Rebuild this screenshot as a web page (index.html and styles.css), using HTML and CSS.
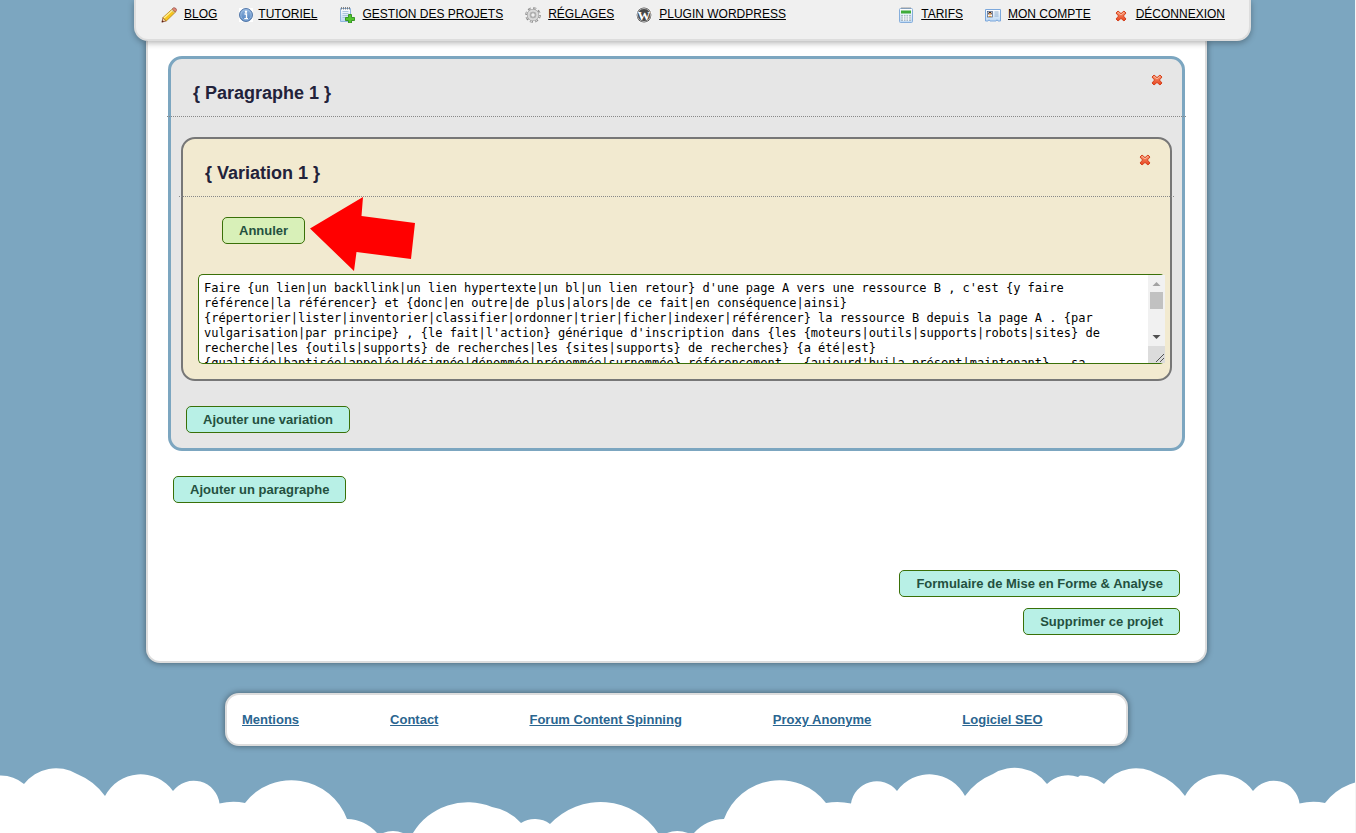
FILE: index.html
```html
<!DOCTYPE html>
<html lang="fr">
<head>
<meta charset="utf-8">
<title>Paragraphes</title>
<link rel="stylesheet" href="styles.css">
</head>
<body>
<svg class="defs" width="0" height="0" aria-hidden="true">
  <defs>
    <linearGradient id="red" x1="0" y1="0" x2="0" y2="1"><stop offset="0" stop-color="#f79a74"/><stop offset="1" stop-color="#e8401c"/></linearGradient>
    <linearGradient id="blue" x1="0" y1="0" x2="0" y2="1"><stop offset="0" stop-color="#8fb4df"/><stop offset="1" stop-color="#4f80bd"/></linearGradient>
    <linearGradient id="sheet" x1="0" y1="0" x2="0" y2="1"><stop offset="0" stop-color="#ffffff"/><stop offset="1" stop-color="#bcd8f4"/></linearGradient>
    <symbol id="cross" viewBox="0 0 12 12">
      <path d="M3 1 6 3.6 9 1 11 3 8.4 6 11 9 9 11 6 8.4 3 11 1 9 3.6 6 1 3Z" fill="url(#red)" stroke="#d5431f" stroke-width="1" stroke-linejoin="round"/>
      <path d="M3 2.4 6 5 9 2.4" fill="none" stroke="#ffc4a8" stroke-width=".8"/>
    </symbol>
  </defs>
</svg>

<div class="page">
  <header class="topbar">
    <ul class="menu">
      <li><svg class="icon" viewBox="0 0 16 16" aria-hidden="true"><path d="M1 15 2 10.5 5.3 14Z" fill="#f2cfa5" stroke="#7a3b1a" stroke-width=".7"/><path d="M2 10.5 11.5 1.8 14.8 4.8 5.3 14Z" fill="#f6c51d" stroke="#a87410" stroke-width=".7"/><path d="M3 11 12 2.8" stroke="#fff09a" stroke-width="1.2"/><path d="M11.2 2 12.8.6Q15.800 1 15.700 3.600L14.300 5Z" fill="#e2867a" stroke="#8a5044" stroke-width=".6"/><path d="M10.300 2.800 13.600 6" stroke="#bbb" stroke-width="1"/><path d="M.6 15.500 1.200 13.200 2.900 14.800Z" fill="#5b1d14"/></svg><a href="#">BLOG</a></li>
      <li class="tight"><svg class="icon small" viewBox="0 0 14 14" aria-hidden="true"><rect width="14" height="14" fill="#fff"/><circle cx="7" cy="7" r="6.500" fill="url(#blue)" stroke="#5579a8"/><circle cx="7" cy="7" r="5.200" fill="none" stroke="#a9c7ea" stroke-width=".6"/><circle cx="7" cy="3.700" r="1.200" fill="#fff"/><path d="M5.500 6H7.500V10.500M5.300 10.700H9" fill="none" stroke="#fff" stroke-width="1.300"/></svg><a href="#">TUTORIEL</a></li>
      <li><svg class="icon" viewBox="0 0 16 16" aria-hidden="true"><path d="M1.500 1.500H11.500V14.500H1.500Z" fill="url(#sheet)" stroke="#8eb4dc"/><path d="M2.500 0V2.500M4.500 0V2.500M6.500 0V2.500M8.500 0V2.500M10.500 0V2.500" stroke="#777" stroke-width=".9"/><path d="M3.500 4.500H9.500M3.500 6.500H9.500M3.500 8.500H9M3.500 10.500H7" stroke="#9dbbd8" stroke-width=".8"/><path d="M9.500 7.500H12.500V10.500H15.500V13.500H12.500V16H9.500V13.500H6.500V10.500H9.500Z" fill="#52c52f" stroke="#2f8f1c" stroke-width=".9"/></svg><a href="#">GESTION DES PROJETS</a></li>
      <li><svg class="icon" viewBox="0 0 16 16" aria-hidden="true"><circle cx="8" cy="8" r="6.700" fill="none" stroke="#8b8b8b" stroke-width="2.200" stroke-dasharray="3 2.260"/><circle cx="8" cy="8" r="6.500" fill="none" stroke="#d4d4d4" stroke-width="1.400" stroke-dasharray="1.600 3.505" stroke-dashoffset="-.7"/><circle cx="8" cy="8" r="4.400" fill="none" stroke="#999" stroke-width="3.400"/><circle cx="8" cy="8" r="4.400" fill="none" stroke="#d9d9d9" stroke-width="2.300"/><circle cx="8" cy="8" r="2.300" fill="#f0f0f0" stroke="#8b8b8b" stroke-width=".8"/></svg><a href="#">RÉGLAGES</a></li>
      <li><svg class="icon" viewBox="0 0 16 16" aria-hidden="true"><circle cx="8" cy="8" r="8" fill="#fff"/><circle cx="8" cy="8" r="7.400" fill="#464646"/><circle cx="8" cy="8" r="6.500" fill="none" stroke="#fff" stroke-width=".6"/><text x="8" y="13" text-anchor="middle" class="logo-letter">W</text></svg><a href="#">PLUGIN WORDPRESS</a></li>
      <li class="push"><svg class="icon" viewBox="0 0 16 16" aria-hidden="true"><rect x="1.500" y="1.500" width="13" height="14" rx="1" fill="url(#sheet)" stroke="#86aedb"/><path d="M4 0V2M6 0V2M8 0V2M10 0V2M12 0V2" stroke="#888" stroke-width=".8"/><path d="M3 3.500H13V6.500H3Z" fill="#3eab3a"/><path d="M3 8H13V14H3Z" fill="#a7b8c6"/><path d="M3 9.900H13M3 12H13M5.500 7.500V14M8 7.500V14M10.500 7.500V14" stroke="#fff" stroke-width=".8"/></svg><a href="#">TARIFS</a></li>
      <li><svg class="icon" viewBox="0 0 16 16" aria-hidden="true"><path d="M.5 2.500H15.500V14H13Q12 11.500 11 14H5Q4 11.500 3 14H.5Z" fill="url(#sheet)" stroke="#7ca8dc"/><rect x="2.500" y="4.500" width="5" height="5.500" fill="#fff" stroke="#455a80" stroke-width=".7"/><circle cx="5" cy="6.500" r="1.700" fill="#3b2414"/><circle cx="5" cy="7.100" r="1.200" fill="#f2b27a"/><path d="M3 10Q5 7.800 7 10Z" fill="#d98c1e"/><path d="M9.500 5H13.500M9.500 7H13.500M9.500 9H13.500" stroke="#89a7c8" stroke-width=".9"/></svg><a href="#">MON COMPTE</a></li>
      <li><svg class="icon cross" viewBox="-2 -3 16 16" aria-hidden="true"><use href="#cross" width="12" height="12"/></svg><a href="#">DÉCONNEXION</a></li>
    </ul>
  </header>

  <main class="sheet">
    <section class="paragraph">
      <div class="heading">
        <h2>{ Paragraphe 1 }</h2>
        <button class="close" type="button" aria-label="Supprimer le paragraphe"><svg width="12" height="12" aria-hidden="true"><use href="#cross"/></svg></button>
      </div>
      <section class="variation">
        <div class="heading">
          <h2>{ Variation 1 }</h2>
          <button class="close" type="button" aria-label="Supprimer la variation"><svg width="12" height="12" aria-hidden="true"><use href="#cross"/></svg></button>
        </div>
        <div class="cancel">
          <button class="btn green" type="button">Annuler</button>
          <svg class="arrow" width="106" height="75" viewBox="0 0 106 75" aria-hidden="true"><path d="M0 31.500 53 0 51.500 19 105 26 101 62 46.500 55 44 74Z" fill="#f00"/></svg>
        </div>
        <div class="editor">
          <textarea aria-label="Variation 1" spellcheck="false">Faire {un lien|un backllink|un lien hypertexte|un bl|un lien retour} d'une page A vers une ressource B , c'est {y faire référence|la référencer} et {donc|en outre|de plus|alors|de ce fait|en conséquence|ainsi} {répertorier|lister|inventorier|classifier|ordonner|trier|ficher|indexer|référencer} la ressource B depuis la page A . {par vulgarisation|par principe} , {le fait|l'action} générique d'inscription dans {les {moteurs|outils|supports|robots|sites} de recherche|les {outils|supports} de recherches|les {sites|supports} de recherches} {a été|est} {qualifiée|baptisée|appelée|désignée|dénommée|prénommée|surnommée} référencement , {aujourd'hui|a présent|maintenant} , sa</textarea>
          <svg class="scroll" width="17" height="88" aria-hidden="true"><path d="M0 0H17V88H0Z" fill="#f1f1f1"/><path d="M4.500 11 8.500 7 12.500 11Z" fill="#a3a3a3"/><path d="M2 17H15V34H2Z" fill="#c1c1c1"/><path d="M4.500 60 8.500 64 12.500 60Z" fill="#505050"/><path d="M0 71H17V88H0Z" fill="#dcdcdc"/><path d="M8 87 16 79M12 87 16 83" stroke="#555" stroke-width="1"/></svg>
        </div>
      </section>
      <button class="btn add" type="button">Ajouter une variation</button>
    </section>
    <button class="btn add-paragraph" type="button">Ajouter un paragraphe</button>
    <div class="actions">
      <button class="btn" type="button">Formulaire de Mise en Forme &amp; Analyse</button>
      <button class="btn" type="button">Supprimer ce projet</button>
    </div>
  </main>

  <footer class="links">
    <a href="#">Mentions</a>
    <a href="#">Contact</a>
    <a href="#">Forum Content Spinning</a>
    <a href="#">Proxy Anonyme</a>
    <a href="#">Logiciel SEO</a>
  </footer>
</div>

<svg class="clouds" aria-hidden="true">
  <defs>
    <pattern id="cloud" width="1080" height="66" patternUnits="userSpaceOnUse">
      <path fill="#fff" d="M0 66V8.500A36 36 0 0 1 24 17A40.500 40.500 0 0 1 77 7A64 64 0 0 1 105 29A40 40 0 0 1 173 24A26 26 0 0 1 219.500 36.500A60 60 0 0 1 245 36A59 59 0 0 1 347 52A42 42 0 0 1 377 66H383Q393 62 403 66H413A64 64 0 0 1 492 40A50 50 0 0 1 521 56A26 26 0 0 1 550 57A69 69 0 0 1 658 66H667Q677 62 688 66H694A42 42 0 0 1 724 52A59 59 0 0 1 826 36A60 60 0 0 1 851 36.500A26 26 0 0 1 897 24A40 40 0 0 1 965 29A64 64 0 0 1 993 7A40.500 40.500 0 0 1 1047 17A30 30 0 0 1 1078 10L1080 8.500V66Z"/>
    </pattern>
  </defs>
  <rect width="100%" height="66" fill="url(#cloud)"/>
</svg>
</body>
</html>
```

FILE: styles.css
```css
* { box-sizing: border-box; }

html { background: #f4f4f4; }

body {
  margin: 0 1px 0 0;
  min-height: 100vh;
  display: flex;
  flex-direction: column;
  background: #7ca6c0;
  font-family: Arial, "Liberation Sans", sans-serif;
  overflow-x: hidden;
}

.defs { position: absolute; }

.page {
  width: 100%;
  max-width: 1063px;
  margin: 0 auto;
  padding-right: 2px;
}

.topbar {
  position: relative;
  z-index: 1;
  margin: 0 -44px 0 -12px;
  padding: 7px 24px 16px 25px;
  background: #f0f0f0;
  border: 2px solid #ddd;
  border-top: 0;
  border-radius: 0 0 14px 14px;
  box-shadow: 0 2px 6px rgba(0, 0, 0, .3);
}

.menu {
  display: flex;
  gap: 22px;
  margin: 0;
  padding: 0;
  list-style: none;
  font-size: 12px;
  line-height: 14px;
}

.menu li { display: flex; gap: 7px; }
.menu .tight { gap: 5px; }
.menu .push { margin-left: auto; }
.menu a { color: #000; }

.icon { width: 16px; height: 16px; flex: none; }
.icon.small { width: 14px; height: 14px; margin-top: 1px; }
.logo-letter { font: bold 13px "Liberation Serif", serif; fill: #fff; }

.sheet {
  display: flow-root;
  padding: 15px 20px 26px;
  background: #fff;
  border: 2px solid #ddd;
  border-top: 0;
  border-radius: 0 0 14px 14px;
  box-shadow: 0 0 6px rgba(0, 0, 0, .45);
}

.paragraph {
  background: #e6e6e6;
  border: 3px solid #7ca6c0;
  border-radius: 14px;
  padding-bottom: 15px;
}

.heading {
  display: flex;
  justify-content: space-between;
  align-items: flex-start;
  height: 58px;
  margin: 0 -4px 20px;
  padding: 15px 23px 0 26px;
  border-bottom: 1px dotted #888;
}

.heading h2 {
  margin: 8px 0 0;
  color: #22223a;
  font-size: 18px;
  line-height: 22px;
}

.close {
  display: flex;
  margin: 0;
  padding: 0;
  background: none;
  border: 0;
}

.variation {
  margin: 0 10px 25px;
  padding-bottom: 15px;
  background: #f2ead0;
  border: 2px solid #777;
  border-radius: 14px;
}

.cancel {
  position: relative;
  padding-left: 39px;
}

.arrow {
  position: absolute;
  left: 127px;
  top: -20px;
}

.btn {
  display: block;
  height: 27px;
  padding: 0 16px;
  color: #24503f;
  background: #b8f0e6;
  border: 1px solid #3a7008;
  border-radius: 5px;
  font: bold 13px/15px Arial, "Liberation Sans", sans-serif;
}

.btn.green { background: #d8f0b8; }
.add { margin-left: 15px; }
.add-paragraph { margin: 25px 0 0 5px; }

.editor {
  position: relative;
  margin: 30px 5px 0 15px;
}

textarea {
  display: block;
  width: 100%;
  height: 90px;
  margin: 0;
  padding: 6px 18px 0 5px;
  color: #000;
  background: #fff;
  border: 1px solid #3a7008;
  border-right: 0;
  border-radius: 5px;
  outline: 0;
  overflow: hidden;
  resize: none;
  font: 500 12px/15px "DejaVu Sans Mono", monospace;
}

.scroll {
  position: absolute;
  top: 1px;
  right: 0;
}

.actions {
  display: flex;
  flex-direction: column;
  align-items: flex-end;
  gap: 11px;
  margin: 67px 5px 0 0;
}

.links {
  display: flex;
  flex-wrap: wrap;
  gap: 15px 91px;
  margin: 30px 79px 0;
  padding: 17px 15px;
  background: #fff;
  border: 2px solid #ddd;
  border-radius: 14px;
  box-shadow: 0 0 6px rgba(0, 0, 0, .45);
  font-size: 13px;
  line-height: 15px;
  font-weight: bold;
}

.links a { color: #2a6590; }

.clouds {
  display: block;
  width: 100%;
  height: 66px;
  margin-top: auto;
}
```
